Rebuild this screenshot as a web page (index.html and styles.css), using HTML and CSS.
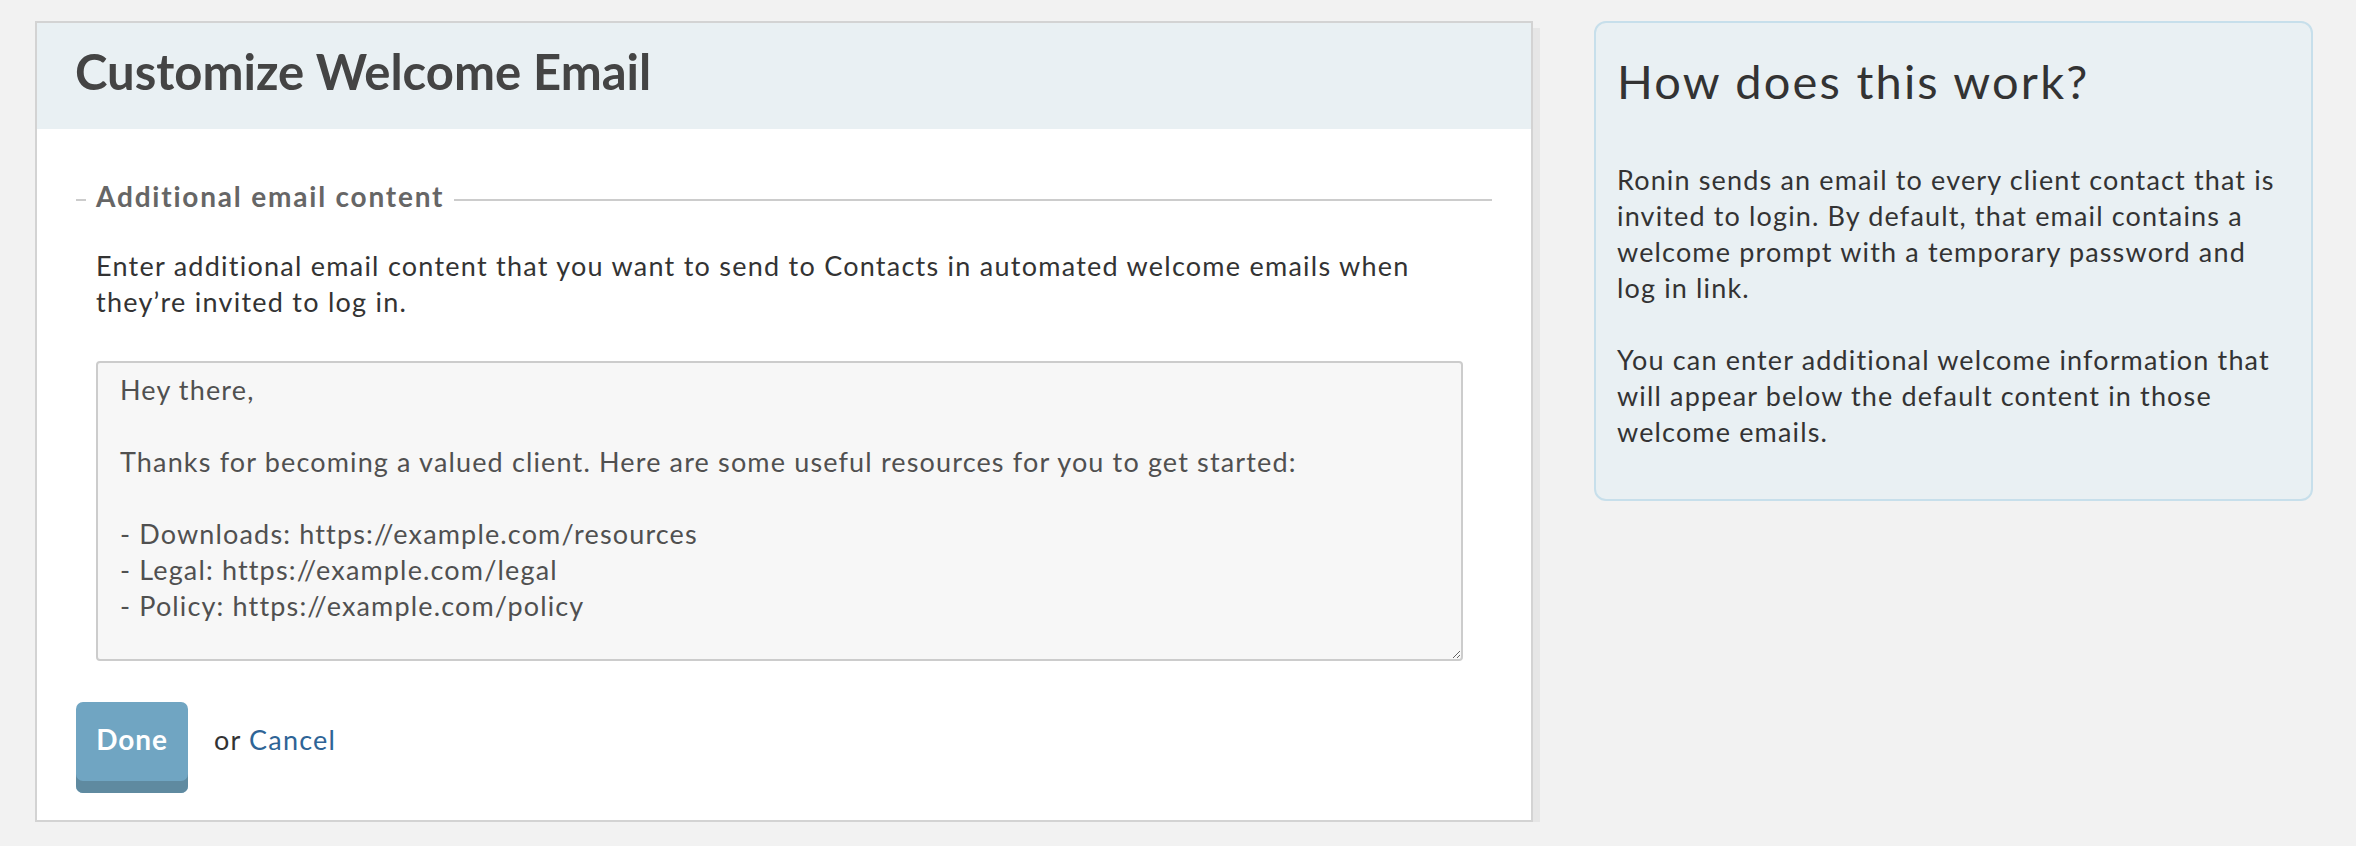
FILE: index.html
```html
<!DOCTYPE html>
<html lang="en">
<head>
<meta charset="utf-8">
<title>Customize Welcome Email</title>
<link rel="stylesheet" href="styles.css">
</head>
<body>
<div class="page">
  <main class="card">
    <header class="card-head">
      <h1 class="card-title">Customize Welcome Email</h1>
    </header>
    <div class="card-body">
      <section class="group">
        <div class="legend"><span class="legend-text">Additional email content</span></div>
        <div class="group-body">
          <p class="hint">Enter additional email content that you want to send to Contacts in automated welcome emails when they’re invited to log in.</p>
          <textarea class="content">Hey there,

Thanks for becoming a valued client. Here are some useful resources for you to get started:

- Downloads: https://example.com/resources
- Legal: https://example.com/legal
- Policy: https://example.com/policy</textarea>
        </div>
      </section>
      <div class="actions">
        <button class="btn" type="button">Done</button>
        <span class="alt">or <a class="link" href="#">Cancel</a></span>
      </div>
    </div>
  </main>
  <aside class="help">
    <h2 class="help-title">How does this work?</h2>
    <p class="help-text">Ronin sends an email to every client contact that is invited to login. By default, that email contains a welcome prompt with a temporary password and log in link.</p>
    <p class="help-text">You can enter additional welcome information that will appear below the default content in those welcome emails.</p>
  </aside>
</div>
</body>
</html>
```
FILE: styles.css
```css
html, body {
  margin: 0;
  padding: 0;
  background: #f2f2f2;
}

body {
  font-family: Lato, "Open Sans", "Liberation Sans", sans-serif;
  color: #333;
}

.page {
  display: flex;
  align-items: flex-start;
  gap: 61px;
  padding: 21px 43px 0 35px;
}

.card {
  flex: 0 0 1498px;
  box-sizing: border-box;
  background: #fff;
  border: 2px solid #d3d3d3;
  box-shadow: 7px 7px 0 #e6e6e6;
}

.card-head {
  background: #e9f0f3;
  padding: 19px 38px 28px;
}

.card-title {
  margin: 0;
  font-size: 49px;
  line-height: 1.2;
  font-weight: 700;
  color: #444;
}

.card-body {
  padding: 51px 39px 27px;
}

.legend {
  display: flex;
  align-items: center;
  font-size: 28px;
  line-height: 1.2;
  font-weight: 700;
  letter-spacing: 1.8px;
  color: #666;
}

.legend::before,
.legend::after {
  content: "";
  height: 2px;
  background: #cccccc;
  margin-top: 6px;
}

.legend::before {
  width: 10px;
  margin-right: 10px;
}

.legend::after {
  flex: 1;
  margin-left: 10px;
}

.group-body {
  padding: 0 29px 0 20px;
}

.hint {
  margin: 35px 0 41px;
  font-size: 27px;
  line-height: 36px;
  letter-spacing: 1.25px;
  color: #333;
}

.content {
  display: block;
  box-sizing: border-box;
  width: 100%;
  height: 300px;
  margin: 0;
  padding: 9px 22px 11px;
  border: 2px solid #cccccc;
  border-radius: 4px;
  background: #f7f7f7;
  font-family: Lato, "Open Sans", "Liberation Sans", sans-serif;
  font-size: 27px;
  line-height: 36px;
  letter-spacing: 1.15px;
  color: #505050;
  resize: vertical;
}

.actions {
  display: flex;
  align-items: flex-start;
  margin-top: 41px;
}

.btn {
  width: 112px;
  height: 91px;
  padding: 0 0 17px;
  border: 0;
  border-radius: 7px;
  background: #70a5c2;
  box-shadow: inset 0 -12px 0 #5f8aa0;
  color: #fff;
  font-family: Lato, "Open Sans", "Liberation Sans", sans-serif;
  font-size: 28px;
  font-weight: 700;
  letter-spacing: 0.9px;
  cursor: pointer;
}

.alt {
  margin: 20px 0 0 26px;
  font-size: 27px;
  line-height: 36px;
  letter-spacing: 1.2px;
  color: #333;
}

.link {
  color: #2e6496;
  text-decoration: none;
}

.help {
  flex: 0 0 719px;
  box-sizing: border-box;
  background: #e9f0f3;
  border: 2px solid #c7dfeb;
  border-radius: 12px;
  padding: 30px 21px 49px;
}

.help-title {
  margin: 0;
  font-size: 47px;
  line-height: 1.2;
  font-weight: 400;
  letter-spacing: 2.2px;
  color: #333;
}

.help-text {
  margin: 53px 0 0;
  font-size: 27px;
  line-height: 36px;
  letter-spacing: 1.15px;
  color: #333;
}

.help-text + .help-text {
  margin-top: 36px;
}
```
